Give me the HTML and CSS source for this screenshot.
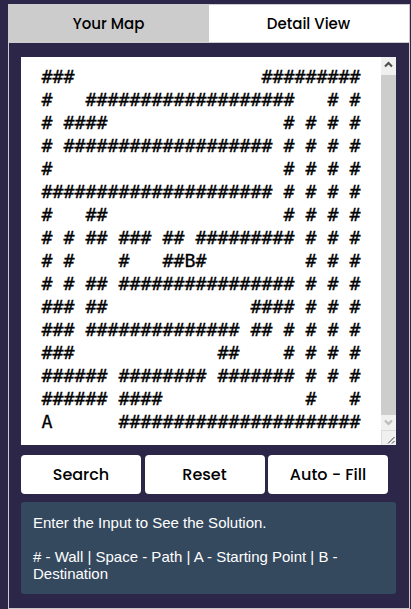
FILE: index.html
```html
<!DOCTYPE html>
<html lang="en">
<head>
<meta charset="utf-8">
<title>Map Search</title>
<link rel="stylesheet" href="styles.css">
</head>
<body>
<main class="panel">
  <nav class="tabs">
    <button class="tab active">Your Map</button>
    <button class="tab">Detail View</button>
  </nav>
  <section class="content">
    <div class="editor">
<pre class="map">###                 #########
#   ###################   # #
# ####                # # # #
# ################### # # # #
#                     # # # #
##################### # # # #
#   ##                # # # #
# # ## ### ## ######### # # #
# #    #   ##B#         # # #
# # ## ################ # # #
### ##             #### # # #
### ############## ## # # # #
###             ##    # # # #
###### ######## ####### # # #
###### ####             #   #
A      ######################</pre>
      <div class="scrollbar">
        <svg class="up" viewBox="0 0 15 18"><path d="M4 9.5 7.5 6 11 9.5" fill="none" stroke="#505050" stroke-width="2.2"/></svg>
        <div class="thumb"></div>
        <svg class="down" viewBox="0 0 15 15"><path d="M4 5.5 7.5 9 11 5.5" fill="none" stroke="#bcbcbc" stroke-width="2.2"/></svg>
        <svg class="grip" viewBox="0 0 15 15"><path d="M0 .5H15M.5 0V15" stroke="#dcdcdc"/><path d="M7 13.5 13.5 7M11 13.5 13.5 11" stroke="#444" stroke-width="1"/></svg>
      </div>
    </div>
    <div class="actions">
      <button class="btn">Search</button>
      <button class="btn">Reset</button>
      <button class="btn">Auto - Fill</button>
    </div>
    <div class="info">
      <p>Enter the Input to See the Solution.</p>
      <p># - Wall | Space - Path | A - Starting Point | B - Destination</p>
    </div>
  </section>
</main>
</body>
</html>
```
FILE: styles.css
```css
* { box-sizing: border-box; }
body {
  margin: 0;
  height: 609px;
  padding: 4px 1px 0 8px;
  overflow: hidden;
  background: #2c2748;
  font-family: "Liberation Sans", Arial, sans-serif;
}
.panel { width: 402px; }
.tabs {
  display: flex;
  height: 39px;
  border: 1px solid #ccc;
  background: #fff;
}
.tab {
  flex: 1;
  padding: 0 1px 0 0;
  border: 0;
  background: #fff;
  color: #000;
  font: 500 15px Poppins, Inter, sans-serif;
}
.tab.active { background: #ccc; }
.content {
  height: 566px;
  padding: 14px 12px 0;
  border: 1px solid #ccc;
  border-top: 0;
}
.editor {
  display: flex;
  width: 375px;
  height: 388px;
  background: #fff;
}
.map {
  flex: 1;
  margin: 0;
  padding: 8px 0 0 20.6px;
  color: #000;
  font: 18.27px/23px "DejaVu Sans Mono", monospace;
  -webkit-text-stroke: 0.3px #000;
}
.scrollbar {
  display: flex;
  flex-direction: column;
  width: 15px;
  background: #f0f0f0;
}
.up { height: 18px; }
.thumb { flex: 1; background: #cdcdcd; }
.down, .grip { height: 15px; }
.actions {
  display: flex;
  gap: 3.5px;
  margin-top: 10px;
}
.btn {
  width: 120px;
  height: 39px;
  padding: 0;
  border: 0;
  border-radius: 4px;
  background: #fff;
  color: #000;
  font: 500 16px Poppins, Inter, sans-serif;
}
.info {
  width: 375px;
  height: 92px;
  margin-top: 8px;
  padding: 12px;
  border-radius: 3px;
  background: #35495e;
  color: #fff;
  font-size: 15px;
  line-height: 17px;
}
.info p { margin: 0 0 17px; }
```
